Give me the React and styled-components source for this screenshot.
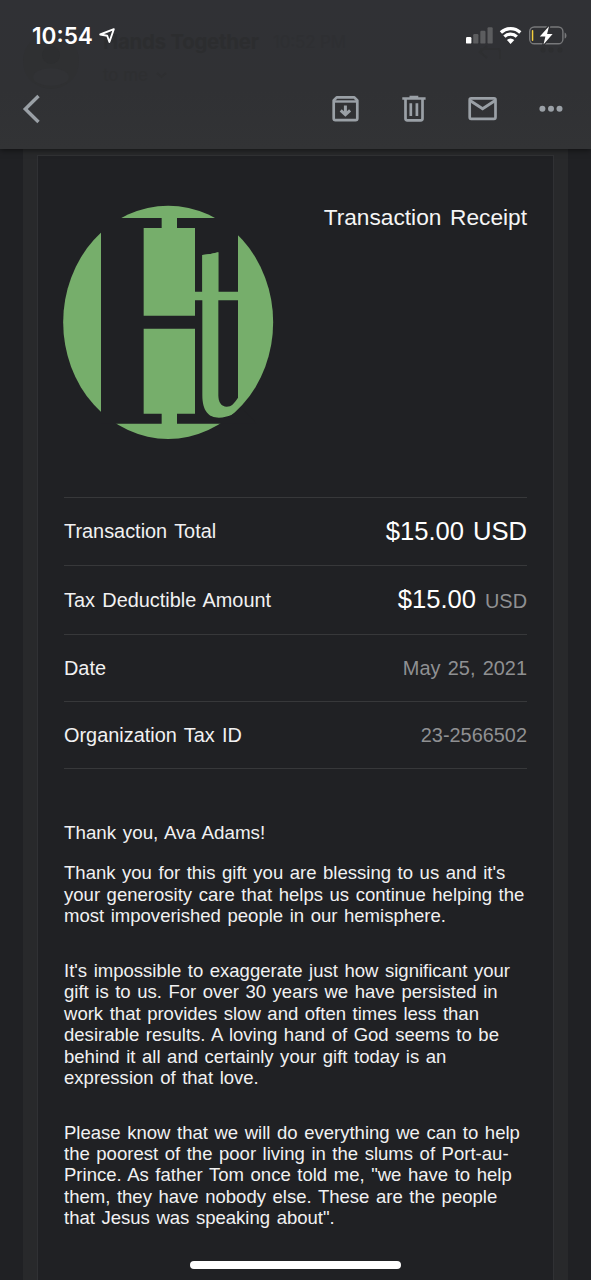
import styled, { createGlobalStyle } from "styled-components"

const rows = [
  { label: "Transaction Total", amount: "$15.00 USD", height: 68, top: 0 },
  { label: "Tax Deductible Amount", amount: "$15.00", unit: "USD", height: 69, lift: 2, top: 0 },
  { label: "Date", value: "May 25, 2021", height: 67, top: 1 },
  { label: "Organization Tax ID", value: "23-2566502", height: 67, top: 1 },
]

const paragraphs = [
  {
    gap: 19,
    size: 18.8,
    lines: ["Thank you, Ava Adams!"],
  },
  {
    gap: 33,
    lines: [
      "Thank you for this gift you are blessing to us and it's",
      "your generosity care that helps us continue helping the",
      "most impoverished people in our hemisphere.",
    ],
  },
  {
    gap: 33,
    lines: [
      "It's impossible to exaggerate just how significant your",
      "gift is to us. For over 30 years we have persisted in",
      "work that provides slow and often times less than",
      "desirable results. A loving hand of God seems to be",
      "behind it all and certainly your gift today is an",
      "expression of that love.",
    ],
  },
  {
    gap: 0,
    lines: [
      "Please know that we will do everything we can to help",
      "the poorest of the poor living in the slums of Port-au-",
      "Prince. As father Tom once told me, \"we have to help",
      "them, they have nobody else. These are the people",
      "that Jesus was speaking about\".",
    ],
  },
]

function StatusIcons() {
  return (
    <svg width="103" height="24" viewBox="465 24 103 24">
      <rect x="466" y="37" width="5.4" height="6.6" rx="1.2" fill="#fff" />
      <g fill="#5c5d5f">
        <rect x="473.2" y="34" width="5.2" height="9.6" rx="1.2" />
        <rect x="480.3" y="30.8" width="5.2" height="12.8" rx="1.2" />
        <rect x="487.5" y="27.2" width="5.2" height="16.4" rx="1.2" />
      </g>
      <g fill="none" stroke="#fff" strokeWidth="3.2">
        <path d="M500.9 32.5a14 14 0 0 1 19.4 0" />
        <path d="M504.4 36.7a8.8 8.8 0 0 1 12.4 0" />
      </g>
      <path d="M506.9 40.1a5.6 5.6 0 0 1 7.4 0l-3.7 3.8z" fill="#fff" />
      <rect x="529.7" y="27" width="33.2" height="16.8" rx="4.6" fill="none" stroke="#77787a" strokeWidth="1.4" />
      <path d="M564.6 32.4c2.5 1 2.5 5.2 0 6.2z" fill="#77787a" />
      <rect x="531.8" y="30" width="1.5" height="11" rx=".7" fill="#f5cf3e" />
      <path d="M549 26.2L539.8 36.5h5.6l-1.9 8 9.1-10.4h-5.5z" fill="#fff" stroke="#303134" strokeWidth="2.6" paintOrder="stroke" strokeLinejoin="round" />
    </svg>
  )
}

function Logo() {
  return (
    <LogoSvg viewBox="39 30 633 705">
      <ellipse cx="354.5" cy="382" rx="315" ry="350" fill="#76ae6b" />
      <g fill="#202124">
        <path d="M153 69H335V99H281V362H435V99H381V69H564V290H505V172Q482 179 457 180V290H435V401H281V656H335V686H153Z" />
        <path d="M505 316H564V608C553 625 544 635 530 635C514 635 505 622 505 600Z" />
        <path d="M435 316H457V600C457 648 476 668 507 668C535 668 556 656 576 640L620 686H381V656H435Z" />
      </g>
      <path d="M457 180Q482 179 505 172V300H457Z" fill="#76ae6b" />
    </LogoSvg>
  )
}

function Header() {
  return (
    <TopBar>
      <Behind viewBox="0 0 591 149">
        <circle cx="51" cy="61" r="28" fill="#2f3032" />
        <circle cx="51" cy="55" r="9" fill="#2d2e30" />
        <ellipse cx="51" cy="77" rx="18" ry="9" fill="#313235" />
        <g fontFamily="Inter, sans-serif">
          <text x="103" y="49" fontSize="20.5" fontWeight="700" textLength="156" fill="#2c2d2f">Hands Together</text>
          <text x="273" y="48" fontSize="17" textLength="73" fill="#2e2f32">10:52 PM</text>
          <text x="103" y="81" fontSize="17" textLength="45" fill="#2e2f31">to me</text>
        </g>
        <path d="M157 73l4.5 4 4.5-4M487 46l-7 6 7 6M480 49h18q2 0 2 3v7" fill="none" stroke="#2e2f31" strokeWidth="2" />
        <g fill="#2d2e30">
          <circle cx="543" cy="50" r="2.5" />
          <circle cx="551" cy="50" r="2.5" />
          <circle cx="560" cy="50" r="2.5" />
        </g>
      </Behind>
      <StatusBar>
        <Clock>10:54</Clock>
        <svg width="18" height="18" viewBox="98 27 18 18">
          <path d="M113.8 29.2L100.2 34.5l7 1.2 2.2 6.3z" fill="none" stroke="#fff" strokeWidth="1.9" strokeLinejoin="round" />
        </svg>
        <Spacer />
        <StatusIcons />
      </StatusBar>
      <Toolbar>
        <IconButton aria-label="Back" $left={22} $width={20}>
          <svg width="20" height="30" viewBox="22 94 20 30">
            <path d="M38.5 96L25.3 109l13.2 13" fill="none" stroke="#9aa0a6" strokeWidth="3.4" />
          </svg>
        </IconButton>
        <Spacer />
        <IconButton aria-label="Archive" $width={30}>
          <svg width="30" height="30" viewBox="330 94 30 30">
            <path d="M333.7 100.5l3-3.2h17.6l3 3.2v18q0 1.7-1.7 1.7h-20.2q-1.7 0-1.7-1.7z" fill="none" stroke="#9aa0a6" strokeWidth="2.7" strokeLinejoin="round" />
            <path d="M334 101.5h23" stroke="#9aa0a6" strokeWidth="2.4" />
            <path d="M345.4 105.5v8.5" stroke="#9aa0a6" strokeWidth="3" />
            <path d="M340.7 110.3l4.7 4.3 4.7-4.3" fill="none" stroke="#9aa0a6" strokeWidth="3" />
          </svg>
        </IconButton>
        <IconButton aria-label="Delete" $left={39} $width={30}>
          <svg width="30" height="30" viewBox="399 94 30 30">
            <path d="M402.3 98.5h23.3M409.5 97h8.8M405.5 99v19.5q0 1.8 1.8 1.8h13.4q1.8 0 1.8-1.8V99M410.8 103.2v12.8M416.9 103.2v12.8" fill="none" stroke="#9aa0a6" strokeWidth="2.7" />
          </svg>
        </IconButton>
        <IconButton aria-label="Mark unread" $left={38} $width={32}>
          <svg width="32" height="30" viewBox="467 94 32 30">
            <rect x="469.7" y="98.4" width="25.8" height="20.4" rx="1.5" fill="none" stroke="#9aa0a6" strokeWidth="2.7" />
            <path d="M470 100.5l12.6 8.3 12.6-8.3" fill="none" stroke="#9aa0a6" strokeWidth="2.9" />
          </svg>
        </IconButton>
        <IconButton aria-label="More" $left={39} $width={28}>
          <svg width="28" height="30" viewBox="538 94 28 30" fill="#9aa0a6">
            <circle cx="542.4" cy="108.7" r="3" />
            <circle cx="551" cy="108.7" r="3" />
            <circle cx="559.5" cy="108.7" r="3" />
          </svg>
        </IconButton>
      </Toolbar>
    </TopBar>
  )
}

export default function App() {
  return (
    <Screen>
      <GlobalStyle />
      <Header />
      <Mail>
        <Receipt>
          <ReceiptHead>
            <Logo />
            <Title>Transaction Receipt</Title>
          </ReceiptHead>
          <Details>
            {rows.map((row) => (
              <Row key={row.label} $height={row.height}>
                <Label $top={row.top}>{row.label}</Label>
                <Value $top={row.top} $lift={row.lift}>
                  {row.amount && <Amount>{row.amount}</Amount>}
                  {row.unit && <Unit>{row.unit}</Unit>}
                  {row.value}
                </Value>
              </Row>
            ))}
          </Details>
          <Letter>
            {paragraphs.map((p) => (
              <Paragraph key={p.lines[0]} $gap={p.gap} $size={p.size}>
                {p.lines.map((line) => (
                  <Line key={line}>{line}</Line>
                ))}
              </Paragraph>
            ))}
          </Letter>
        </Receipt>
      </Mail>
      <HomeIndicator />
    </Screen>
  )
}

const GlobalStyle = createGlobalStyle`
  body {
    margin: 0;
    background: #202124;
  }
  * {
    box-sizing: border-box;
  }
`

const Screen = styled.div`
  position: relative;
  display: flex;
  flex-direction: column;
  width: 591px;
  height: 1280px;
  overflow: hidden;
  background: #202124;
  color: #f1f1f2;
  font-family: "Liberation Sans", Arial, sans-serif;
`

const TopBar = styled.header`
  position: relative;
  z-index: 1;
  flex: none;
  height: 149px;
  background: linear-gradient(#303135, #303134 60%, #323335);
  box-shadow: 0 1px 6px rgba(0, 0, 0, 0.55);
`

const Behind = styled.svg`
  position: absolute;
  inset: 0;
  width: 591px;
  height: 149px;
`

const StatusBar = styled.div`
  position: relative;
  display: flex;
  align-items: center;
  height: 72px;
  padding: 0 23px 0 32px;
`

const Clock = styled.span`
  width: 66px;
  color: #fff;
  font: 600 22.6px/24px Inter, sans-serif;
  white-space: nowrap;
`

const Spacer = styled.div`
  flex: 1;
`

const Toolbar = styled.nav`
  position: relative;
  display: flex;
  align-items: center;
  height: 74px;
  padding-right: 25px;
`

const IconButton = styled.button`
  display: flex;
  width: ${(p) => p.$width}px;
  height: 30px;
  margin: 0 0 0 ${(p) => p.$left || 0}px;
  padding: 0;
  border: 0;
  background: none;
`

const Mail = styled.main`
  flex: 1;
  margin: 0 23px;
  padding: 6px 14px 0;
  background: #28292b;
`

const Receipt = styled.section`
  height: 100%;
  padding: 49px 26px 0;
  border: 1px solid #303134;
  border-bottom: 0;
  background: #202124;
`

const ReceiptHead = styled.div`
  display: flex;
  justify-content: space-between;
  height: 292px;
`

const LogoSvg = styled.svg`
  width: 211px;
  height: 235px;
  margin-left: -1px;
`

const Title = styled.h1`
  margin: 0;
  color: #f5f5f5;
  font-size: 22.7px;
  font-weight: 400;
  line-height: 25px;
  word-spacing: 2.4px;
`

const Details = styled.div`
  border-top: 1px solid #37383a;
`

const Row = styled.div`
  display: flex;
  align-items: center;
  justify-content: space-between;
  height: ${(p) => p.$height}px;
  border-bottom: 1px solid #37383a;
  font-size: 19.9px;
  word-spacing: 1.8px;
`

const Label = styled.span`
  padding-top: ${(p) => p.$top}px;
`

const Value = styled.span`
  display: flex;
  align-items: baseline;
  padding-top: ${(p) => p.$top}px;
  padding-bottom: ${(p) => p.$lift || 0}px;
  color: #8f9092;
`

const Amount = styled.span`
  color: #fff;
  font-size: 25.6px;
`

const Unit = styled.span`
  margin-left: 9px;
`

const Letter = styled.div`
  margin-top: 53px;
  font-size: 18.55px;
  line-height: 21.45px;
  word-spacing: 1.4px;
`

const Paragraph = styled.p`
  margin: 0 0 ${(p) => p.$gap}px;
  ${(p) => p.$size && `font-size: ${p.$size}px;`}
`

const Line = styled.span`
  display: block;
  white-space: nowrap;
`

const HomeIndicator = styled.div`
  position: absolute;
  bottom: 11px;
  left: 190px;
  width: 211px;
  height: 8px;
  border-radius: 4px;
  background: #fff;
`
